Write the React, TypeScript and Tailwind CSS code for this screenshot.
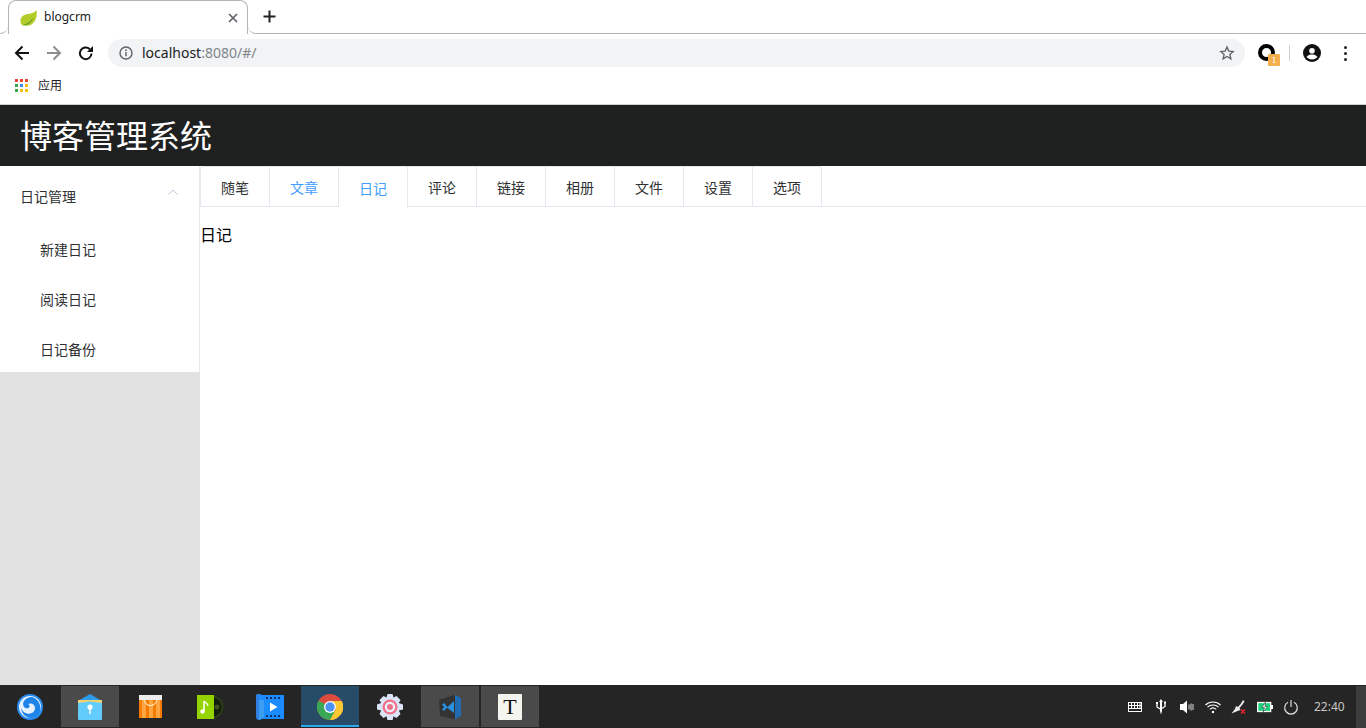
import React from "react";

const cjk = { fontFamily: '"Noto Sans CJK SC", sans-serif' };

function Leaf() {
  return (
    <svg width="17" height="16" viewBox="0 0 17 16">
      <path d="M1 14C-1 8 3 4.500 8 4c4-.4 7-1.500 8.500-4 1 5.500-.5 11.500-5 14.500-4 1.800-8 1.500-10.500-.5z" fill="#b4cc2a" />
      <path d="M2.500 15c4-.8 8-3 10.500-7.500-.8 4.500-5 8-10.500 8z" fill="#5f9a22" />
    </svg>
  );
}

function Apps() {
  const c = ["#ea4335", "#ea4335", "#ea4335", "#34a853", "#4285f4", "#fbbc04", "#34a853", "#fbbc04", "#fbbc04"];
  return (
    <div className="grid grid-cols-3 gap-[2px] w-[13px]">
      {c.map((x, i) => (
        <span key={i} className="w-[3px] h-[3px]" style={{ background: x }} />
      ))}
    </div>
  );
}

function TabBtn({ label, state }: { label: string; state?: "hl" | "active" }) {
  return (
    <div
      className={
        "w-[69px] shrink-0 flex items-center justify-center pt-[2px] text-[14px] border-r border-[#e4e7ed] " +
        (state === "active"
          ? "text-[#409eff] h-[41px] bg-white"
          : state === "hl"
          ? "text-[#409eff] h-[40px] border-b border-[#e4e7ed]"
          : "text-[#303133] h-[40px] border-b border-[#e4e7ed]")
      }
    >
      {label}
    </div>
  );
}

function Slot({ bg, children }: { bg?: string; children?: React.ReactNode }) {
  return (
    <div className={"w-[58px] h-[41px] shrink-0 flex items-center justify-center relative " + (bg || "")}>{children}</div>
  );
}

export default function App() {
  return (
    <div className="w-[1366px] h-[728px] flex flex-col overflow-hidden bg-white" style={cjk}>
      {/* tab strip */}
      <div className="h-[34px] flex shrink-0 bg-white">
        <div className="w-[8px] h-full border-b border-[#b5b5b5] rounded-br-[8px]" />
        <div className="w-[240px] h-full border border-b-0 border-[#b5b5b5] rounded-t-[8px] flex items-center pl-[11px] pr-[9px] bg-white">
          <Leaf />
          <span className="ml-[7px] mb-[1px] text-[12px] text-[#212121] leading-none" style={{ fontFamily: '"Noto Sans", sans-serif' }}>
            blogcrm
          </span>
          <svg className="ml-auto" width="10" height="10" viewBox="0 0 10 10">
            <path d="M1 1l8 8M9 1L1 9" stroke="#5f6368" strokeWidth="1.700" />
          </svg>
        </div>
        <div className="flex-1 h-full border-b border-[#b5b5b5] rounded-bl-[8px] flex items-center pl-[15px]">
          <svg width="13" height="13" viewBox="0 0 13 13">
            <path d="M6.500 0.500v12M0.500 6.500h12" stroke="#202124" strokeWidth="2" />
          </svg>
        </div>
      </div>

      {/* toolbar */}
      <div className="h-[38px] shrink-0 flex items-center pl-[14px] pr-[14px]">
        <svg width="16" height="16" viewBox="0 0 16 16">
          <path d="M15 8H2M8.500 1.500L2 8l6.500 6.500" fill="none" stroke="#111" strokeWidth="2" />
        </svg>
        <svg className="ml-[16px]" width="16" height="16" viewBox="0 0 16 16">
          <path d="M1 8h13M7.500 1.500L14 8l-6.500 6.500" fill="none" stroke="#8e8e8e" strokeWidth="2" />
        </svg>
        <svg className="ml-[16px]" width="16" height="16" viewBox="0 0 16 16">
          <path d="M13.500 8.500a5.800 5.800 0 1 1-1.700-4.300" fill="none" stroke="#111" strokeWidth="2" />
          <path d="M15 1v6H9z" fill="#111" />
        </svg>
        <div className="ml-[14px] w-[1137px] h-[28px] rounded-full bg-[#f1f3f4] flex items-center pl-[11px] pr-[10px]">
          <svg width="14" height="14" viewBox="0 0 14 14">
            <circle cx="7" cy="7" r="6" fill="none" stroke="#5f6368" strokeWidth="1.400" />
            <path d="M7 6v4.200" stroke="#5f6368" strokeWidth="1.500" />
            <circle cx="7" cy="4.200" r="0.900" fill="#5f6368" />
          </svg>
          <span className="ml-[9px] text-[14px] leading-none" style={{ fontFamily: '"Noto Sans", sans-serif' }}>
            <span className="text-[#202124]">localhost</span>
            <span className="text-[#80868b]">:8080/#/</span>
          </span>
          <svg className="ml-auto" width="16" height="16" viewBox="0 0 24 24">
            <path d="M12 3l2.700 6.100 6.600.700-5 4.400 1.500 6.500L12 17.300l-5.800 3.400 1.500-6.500-5-4.400 6.600-.7z" fill="none" stroke="#5f6368" strokeWidth="2" />
          </svg>
        </div>
        <div className="ml-[13px] relative w-[18px] h-[18px]">
          <div className="w-[17px] h-[17px] rounded-full border-[4px] border-black" />
          <div className="absolute left-[10px] top-[10px] w-[12px] h-[12px] rounded-[1px] bg-[#f3ae4e] text-[8px] leading-[12px] text-center text-white">1</div>
        </div>
        <div className="ml-[13px] w-px h-[16px] bg-[#d0d0d0]" />
        <svg className="ml-[13px]" width="18" height="18" viewBox="0 0 18 18">
          <circle cx="9" cy="9" r="9" fill="#111" />
          <circle cx="9" cy="6.800" r="2.800" fill="#fff" />
          <path d="M3.500 13c1.500-2 3.500-2.500 5.500-2.500s4 .5 5.500 2.500c-1.300 1.500-3.300 2.400-5.500 2.400S4.800 14.500 3.500 13z" fill="#fff" />
        </svg>
        <div className="ml-[23px] flex flex-col gap-[3px]">
          <span className="w-[3px] h-[3px] rounded-full bg-[#222]" />
          <span className="w-[3px] h-[3px] rounded-full bg-[#222]" />
          <span className="w-[3px] h-[3px] rounded-full bg-[#222]" />
        </div>
      </div>

      {/* bookmarks */}
      <div className="h-[33px] shrink-0 flex items-center pl-[15px] pb-[6px] border-b border-[#d0d0d0] bg-white">
        <Apps />
        <span className="ml-[10px] text-[12px] text-[#202124]">应用</span>
      </div>

      {/* header */}
      <div className="h-[61px] shrink-0 bg-[#1f2120] flex items-center pl-[20px] pb-[4px] text-[32px] text-white">博客管理系统</div>

      {/* body */}
      <div className="flex-1 flex min-h-0">
        <aside className="w-[200px] shrink-0 bg-[#e1e1e1] flex flex-col">
          <div className="h-[206px] bg-white border-r border-[#e6e6e6] flex flex-col">
            <div className="h-[56px] shrink-0 flex items-center justify-between pt-[4px] pl-[20px] pr-[21px] text-[14px] text-[#303133]">
              <span>日记管理</span>
              <svg className="-mt-[8px]" width="10" height="6" viewBox="0 0 10 6">
                <path d="M0.500 5.500L5 1l4.500 4.500" fill="none" stroke="#b9c8d8" strokeWidth="1" />
              </svg>
            </div>
            {["新建日记", "阅读日记", "日记备份"].map((t) => (
              <div key={t} className="h-[50px] shrink-0 flex items-center pt-[4px] pl-[40px] text-[14px] text-[#303133]">
                {t}
              </div>
            ))}
          </div>
        </aside>
        <main className="flex-1 min-w-0 bg-white">
          <div className="flex h-[41px] border-b border-[#e4e7ed] relative">
            <div className="flex border-l border-t border-[#e4e7ed] rounded-t-[4px] h-[41px]">
              <TabBtn label="随笔" />
              <TabBtn label="文章" state="hl" />
              <TabBtn label="日记" state="active" />
              <TabBtn label="评论" />
              <TabBtn label="链接" />
              <TabBtn label="相册" />
              <TabBtn label="文件" />
              <TabBtn label="设置" />
              <TabBtn label="选项" />
            </div>
          </div>
          <div className="pt-[15px] text-[16px] leading-[24px] text-black">日记</div>
        </main>
      </div>

      {/* taskbar */}
      <div className="h-[43px] shrink-0 bg-[#252525] flex items-center pl-px">
        <div className="flex gap-[2px] items-center">
          <Slot>
            <svg width="26" height="26" viewBox="0 0 26 26">
              <circle cx="13" cy="13" r="13" fill="#2a8cf0" />
              <circle cx="13" cy="13" r="11" fill="#e6f3ff" />
              <path d="M14 3C8 4 5 8 6.500 12c1 2.500 4 3 5.500 1.500 1.200-1.300.5-3-1-3.500 3-1.500 7 0 7 4 0 4-4 6.500-8 5.500-3-.7-5-3-6-5.500.5 6 5.500 10.500 11 10 5.500-.5 9-5 8.500-10C23 8 19 3.500 14 3z" fill="#1f84ea" />
            </svg>
          </Slot>
          <Slot bg="bg-[#4a4a4a]">
            <svg width="24" height="26" viewBox="0 0 24 26">
              <path d="M0 7L12 0l12 7z" fill="#2e9be8" />
              <rect x="0" y="6" width="24" height="20" rx="1" fill="#62cdfc" />
              <path d="M0 6h24v3L12 7.500 0 9z" fill="#f2d374" />
              <circle cx="12" cy="13" r="2.600" fill="#fff" />
              <rect x="11.300" y="14" width="1.400" height="6" fill="#fff" />
            </svg>
          </Slot>
          <Slot>
            <svg width="23" height="23" viewBox="0 0 23 23">
              <rect width="23" height="23" fill="#f57c00" />
              <rect x="3" y="5" width="4" height="18" fill="#ffa640" />
              <rect x="10" y="5" width="4" height="18" fill="#ffa640" />
              <rect x="17" y="5" width="4" height="18" fill="#ffa640" />
              <rect width="23" height="5" fill="#ededed" />
              <path d="M5 4c.5 4 3 6.500 6.500 6.500S17.500 8 18 4" fill="none" stroke="#fff" strokeWidth="1" />
            </svg>
          </Slot>
          <Slot>
            <svg width="27" height="24" viewBox="0 0 27 24">
              <circle cx="15" cy="12" r="11.500" fill="#2a3d18" />
              <circle cx="15" cy="12" r="9.500" fill="#141c0e" />
              <circle cx="20" cy="12" r="2.500" fill="#3f5320" />
              <rect width="17" height="24" fill="#96d400" />
              <path d="M7 6v10.500" stroke="#fff" strokeWidth="1.500" />
              <circle cx="5.500" cy="16.500" r="2.200" fill="#fff" />
              <path d="M7 6c1 2 4 2 4 5" fill="none" stroke="#fff" strokeWidth="1.300" />
            </svg>
          </Slot>
          <Slot>
            <svg width="28" height="26" viewBox="0 0 28 26">
              <path d="M1 0h4v26H3a3 3 0 0 1-3-3V1z" fill="#2f7fe0" />
              <rect x="3" y="1" width="25" height="24" fill="#1a8cff" />
              <path d="M3 6h5v17l-5 3z" fill="#3c9ef0" />
              <path d="M14 8.500l7.500 4.500-7.500 4.500z" fill="#fff" />
              <path d="M10 3h2v2h-2zM14 3h2v2h-2zM18 3h2v2h-2zM22 3h2v2h-2zM10 21h2v2h-2zM14 21h2v2h-2zM18 21h2v2h-2zM22 21h2v2h-2z" fill="#0b2f66" />
            </svg>
          </Slot>
          <Slot bg="bg-[#264c68]">
            <svg width="26" height="26" viewBox="0 0 26 26">
              <circle cx="13" cy="13" r="13" fill="#dd4b3e" />
              <path d="M13 13L1.700 6.500A13 13 0 0 0 13 26l5-8z" fill="#3aa757" />
              <path d="M13 7h11.800A13 13 0 0 1 13 26l6-11z" fill="#fcc934" />
              <circle cx="13" cy="13" r="6" fill="#fff" />
              <circle cx="13" cy="13" r="4.700" fill="#4c93f1" />
            </svg>
            <div className="absolute left-0 right-0 bottom-0 h-[2px] bg-[#2ea7f0]" />
          </Slot>
          <Slot>
            <svg width="26" height="26" viewBox="0 0 26 26">
              <path d="M10.500 0h5l1 3.500 3-1.500 4 4-1.700 3 4.200 1.500v5l-4.200 1 1.700 3.500-4 4-3-1.700-1 4.200h-5l-1-4.200-3 1.700-4-4 1.700-3.500L0 15.500v-5l4.200-1.500-1.700-3 4-4 3 1.500z" fill="#dbe4f7" />
              <circle cx="13" cy="13" r="7.500" fill="#f0728a" />
              <circle cx="13" cy="13" r="5.200" fill="#eef2fb" />
              <circle cx="13" cy="13" r="3" fill="#f0728a" />
            </svg>
          </Slot>
          <Slot bg="bg-[#4a4a4a]">
            <svg width="24" height="24" viewBox="0 0 24 24">
              <path d="M1 5l15-5 7 3v18l-7 3L2 21z" fill="#333" />
              <path d="M17 0l6 3v18l-6 3z" fill="#1f6cb0" />
              <path d="M16 6v12l-7-5.500zM4 9.500L6 8l3.500 4L6 16l-2-1.500 2.200-2.500z" fill="#2b90e0" />
            </svg>
          </Slot>
          <Slot bg="bg-[#4a4a4a]">
            <div className="w-[24px] h-[26px] bg-[#f5f5ef] rounded-[1px] flex items-center justify-center text-[22px] leading-none text-[#111]" style={{ fontFamily: '"Liberation Serif", serif' }}>
              T
            </div>
          </Slot>
        </div>

        <div className="ml-auto flex items-center gap-[10px]">
          <svg width="16" height="16" viewBox="0 0 16 16">
            <rect x="1.500" y="3.500" width="13" height="9" fill="none" stroke="#fff" strokeWidth="1" />
            <path d="M1.500 6.500h13M1.500 9.500h13M4.500 3.500v6M7.500 3.500v6M10.500 3.500v6M13 3.500v6" stroke="#fff" strokeWidth="1" />
          </svg>
          <svg width="16" height="16" viewBox="0 0 16 16">
            <path d="M8 0l2 3H9v9l-1 3.500L7 12V3H6z" fill="#fff" />
            <path d="M4 4.500v3.500l4 2.500M12 4v3.500l-4 2.500" fill="none" stroke="#fff" strokeWidth="1.300" />
            <rect x="3" y="3" width="2" height="2" fill="#fff" />
            <rect x="11" y="2.500" width="2" height="2" fill="#fff" />
          </svg>
          <svg width="16" height="16" viewBox="0 0 16 16">
            <path d="M1 5h3l4-3.500v13L4 11H1z" fill="#fff" />
            <path d="M10 5.500v5M12 4.500v7M14 5v6" stroke="#ddd" strokeWidth="1" />
          </svg>
          <svg width="16" height="16" viewBox="0 0 16 16">
            <path d="M0.500 6c4-4 11-4 15 0M2.500 8.200c3-3 8-3 11 0M4.800 10.300c2-1.700 4.400-1.700 6.400 0" fill="none" stroke="#fff" strokeWidth="1.100" />
            <circle cx="8" cy="13" r="1.200" fill="#fff" />
          </svg>
          <svg width="16" height="16" viewBox="0 0 16 16">
            <path d="M0.500 14.500L4 10l1-3 2 1 3-3.500 2-3.500 1.500 1.500-2 3-3 3.500 1 2-3 1z" fill="#eee" />
            <path d="M10 10.500l4 4M14 10.500l-4 4" stroke="#e8222e" strokeWidth="1.500" />
          </svg>
          <svg width="16" height="16" viewBox="0 0 16 16">
            <rect x="0.700" y="3.500" width="13" height="9" fill="#1fd07c" stroke="#fff" strokeWidth="1.300" />
            <rect x="14" y="6" width="2" height="4" fill="#fff" />
            <path d="M8.500 3L5 8.500h2.500L6 13l4.500-5.500H8z" fill="#fff" stroke="#222" strokeWidth="0.500" />
          </svg>
          <svg width="16" height="16" viewBox="0 0 16 16">
            <path d="M5 3.200a6.300 6.300 0 1 0 6 0" fill="none" stroke="#ddd" strokeWidth="1.200" />
            <path d="M8 1v7" stroke="#ddd" strokeWidth="1.200" />
          </svg>
          <span className="ml-[5px] w-[31px] text-[12px] text-[#c8c8c8]" style={{ fontFamily: '"Noto Sans", sans-serif' }}>
            22:40
          </span>
          <div className="ml-[1px] w-[10px] h-[42px] bg-[#3d3d3d]" />
        </div>
      </div>
    </div>
  );
}
